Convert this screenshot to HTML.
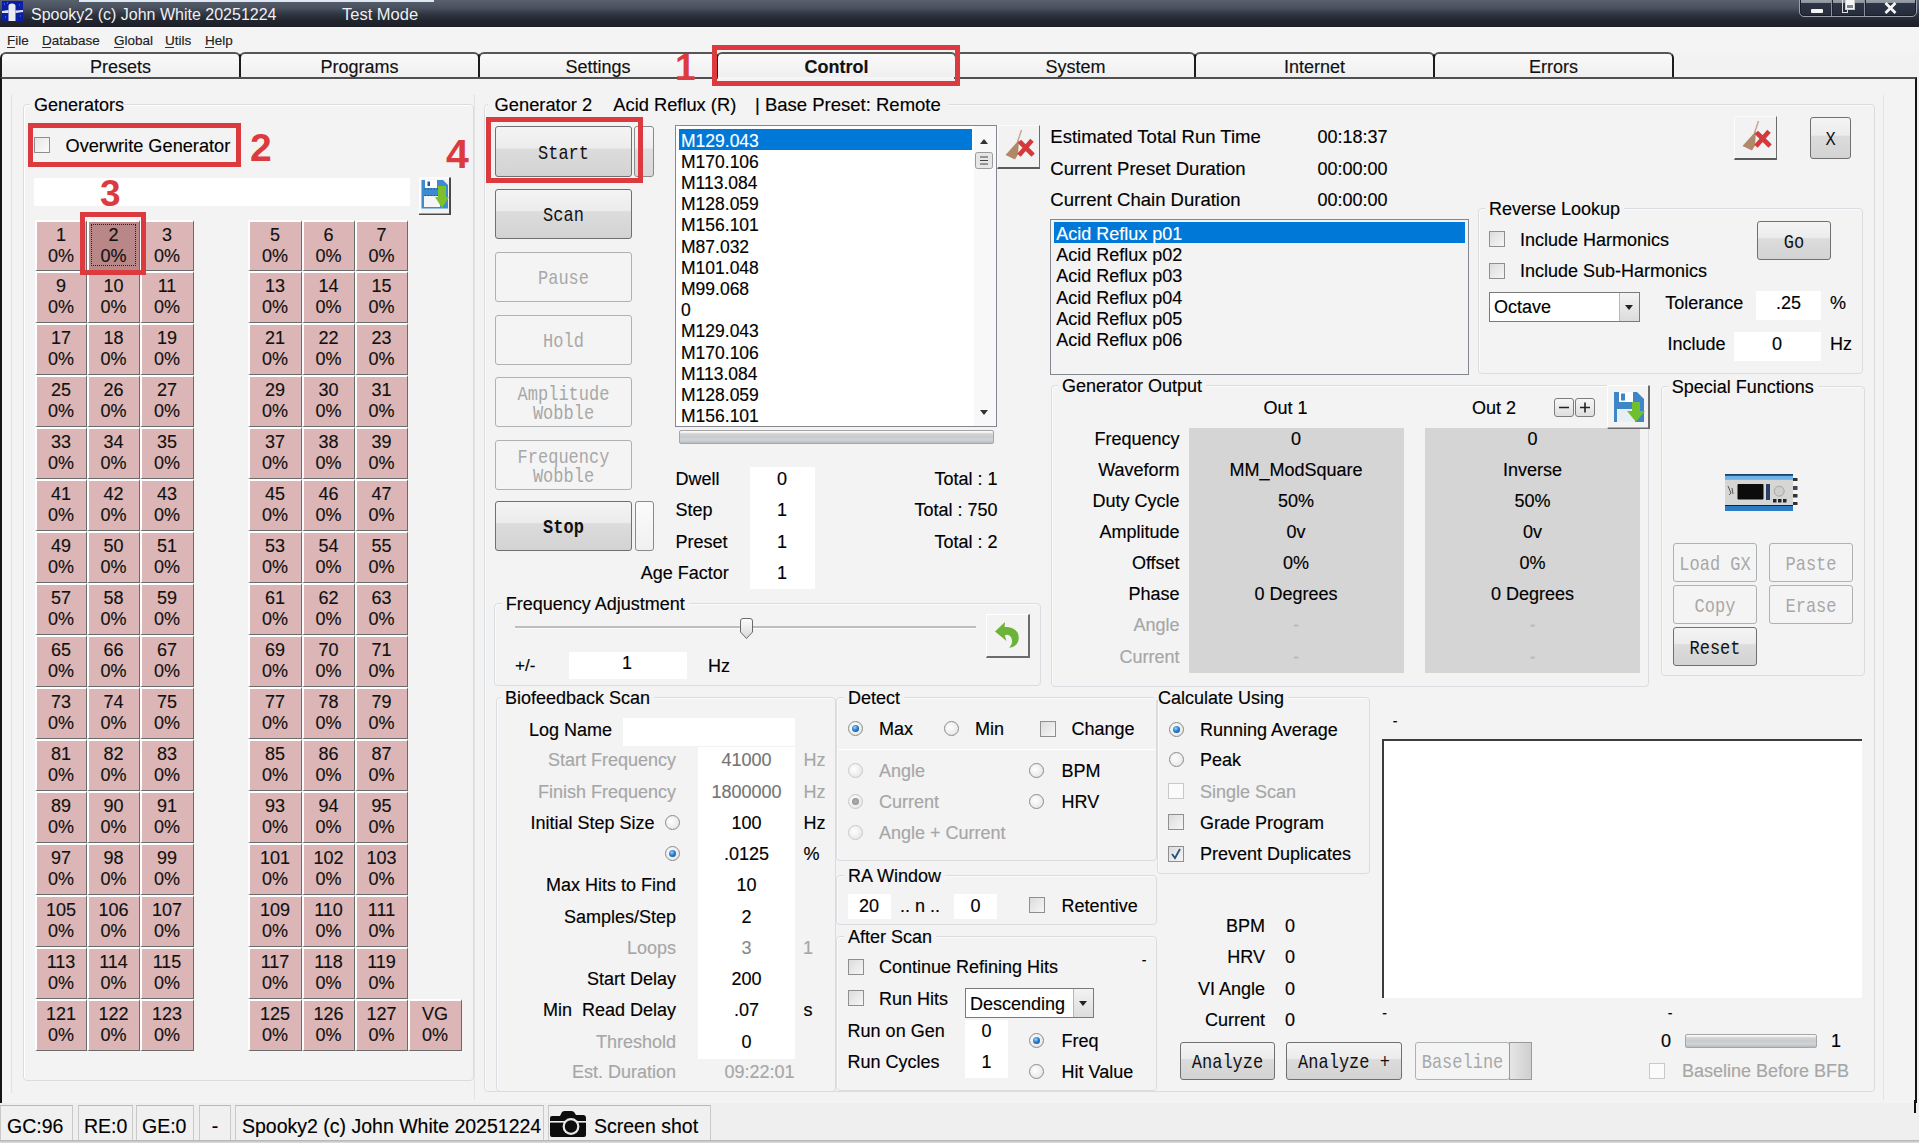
<!DOCTYPE html><html><head><meta charset="utf-8"><title>Spooky2</title><style>
*{margin:0;padding:0;box-sizing:border-box}
html,body{width:1919px;height:1143px;overflow:hidden;background:#f2f2f2;position:relative}
body>div,body>svg{position:absolute}
div{position:absolute}
.t{white-space:pre;color:#000}
.S{font-family:"Liberation Sans",sans-serif;-webkit-text-stroke:0.15px currentColor}
.M{font-family:"Liberation Mono",monospace}
.R{font-family:"Liberation Serif",serif}
.btn{border:1px solid #707070;border-radius:3px;background:linear-gradient(#f4f4f4 0%,#ececec 43%,#dcdcdc 45%,#d3d3d3 100%)}
.dbtn{border:1px solid #adb2b5;border-radius:3px;background:#f4f4f4}
.grp{border:1px solid #d5dfe5;border-radius:4px;box-shadow:inset 1px 1px 0 #fff, 1px 1px 0 #fff}
.cell{background:#dcb6b6;border-top:2px solid #fff;border-left:2px solid #fff;border-right:1px solid #6a6a6a;border-bottom:1px solid #6a6a6a}
.red{border:5px solid #dc3a3f}
.num{font-family:"Liberation Sans",sans-serif;font-weight:bold;color:#dc3a3f;white-space:nowrap}
.wb{background:#fff}
.chk{border:1px solid #8f8f8f;background:linear-gradient(135deg,#e6e6e6,#fbfbfb)}
.rad{border:1px solid #8f8f8f;border-radius:50%;background:radial-gradient(circle at 50% 50%,#fff 0%,#e8e8e8 100%)}
</style></head><body>
<div style="left:0px;top:0px;width:1919px;height:27px;background:linear-gradient(#5a616e 0%,#4a515e 30%,#323844 50%,#22262f 75%,#1c1f28 100%)"></div>
<div style="left:79px;top:0px;width:355px;height:2px;background:#dfe8f2"></div>
<svg style="left:2px;top:1px" width="21" height="21" viewBox="0 0 21 21"><rect x="0" y="0" width="21" height="20" fill="#0c1ea6"/><path d="M6.5 20 V5 Q6.5 2.5 10 2.5 Q13.5 2.5 13.5 5 V20 Z" fill="#e9ecf0"/><path d="M0 10 L6.5 9 V12 L0 12 Z M21 9 L13.5 9.5 V12 L21 11 Z" fill="#dfe4ea"/><path d="M2 3 h1 M17 4 h1 M3 16 h1 M18 15 h1 M5 2h1" stroke="#3aa0ff" stroke-width="1"/></svg>
<div class="t S" style="top:6.5px;font-size:16px;line-height:16px;color:#eef0f3;left:31px;-webkit-text-stroke:0">Spooky2 (c) John White 20251224</div>
<div class="t S" style="top:6.2px;font-size:16.5px;line-height:16.5px;color:#eef0f3;left:342px;-webkit-text-stroke:0">Test Mode</div>
<div style="left:1799px;top:-4px;width:118px;height:21px;border:1px solid #9aa0aa;border-radius:0 0 5px 5px;background:linear-gradient(#a9afb8 0%,#8d949f 30%,#2e3545 32%,#262c3a 100%);box-shadow:inset 0 0 0 1px #1a1e28"></div>
<div style="left:1831px;top:-3px;width:2px;height:19px;background:#1e2330;border-left:1px solid #8a909c"></div>
<div style="left:1864px;top:-3px;width:2px;height:19px;background:#1e2330;border-left:1px solid #8a909c"></div>
<div style="left:1811px;top:9px;width:12px;height:4px;background:#f4f4f4;border-radius:1px"></div>
<div style="left:1842px;top:0px;width:6px;height:13px;border:1px solid #ddd;border-top:none;background:transparent"></div>
<div style="left:1845px;top:-1px;width:10px;height:11px;background:#f5f5f5;border:1px solid #ccc"></div>
<div style="left:1847px;top:5px;width:6px;height:3px;background:#7a8595"></div>
<svg style="left:1884px;top:2px" width="13" height="12" viewBox="0 0 13 12"><path d="M1.5 1 L11.5 11 M11.5 1 L1.5 11" stroke="#f5f5f5" stroke-width="2.8"/></svg>
<div style="left:0px;top:27px;width:1919px;height:26px;background:#f4f4f5"></div>
<div class="t S" style="top:33.8px;font-size:13.5px;line-height:13.5px;color:#222;left:7px;text-decoration:none">File</div>
<div class="t S" style="top:33.8px;font-size:13.5px;line-height:13.5px;color:#222;left:42px;text-decoration:none">Database</div>
<div class="t S" style="top:33.8px;font-size:13.5px;line-height:13.5px;color:#222;left:114px;text-decoration:none">Global</div>
<div class="t S" style="top:33.8px;font-size:13.5px;line-height:13.5px;color:#222;left:165px;text-decoration:none">Utils</div>
<div class="t S" style="top:33.8px;font-size:13.5px;line-height:13.5px;color:#222;left:205px;text-decoration:none">Help</div>
<div style="left:7px;top:47px;width:8px;height:1px;background:#333"></div>
<div style="left:42px;top:47px;width:9px;height:1px;background:#333"></div>
<div style="left:114px;top:47px;width:10px;height:1px;background:#333"></div>
<div style="left:165px;top:47px;width:9px;height:1px;background:#333"></div>
<div style="left:205px;top:47px;width:9px;height:1px;background:#333"></div>
<div style="left:0px;top:52px;width:241px;height:27px;border:2px solid #1c1c1c;border-top-color:#575757;border-bottom:none;border-radius:6px 6px 0 0;background:linear-gradient(#fafafa,#eeeeee)"></div>
<div class="t S" style="top:57.5px;font-size:18px;line-height:18px;color:#111;left:120.5px;transform:translateX(-50%);">Presets</div>
<div style="left:239px;top:52px;width:241px;height:27px;border:2px solid #1c1c1c;border-top-color:#575757;border-bottom:none;border-radius:6px 6px 0 0;background:linear-gradient(#fafafa,#eeeeee)"></div>
<div class="t S" style="top:57.5px;font-size:18px;line-height:18px;color:#111;left:359.5px;transform:translateX(-50%);">Programs</div>
<div style="left:478px;top:52px;width:240px;height:27px;border:2px solid #1c1c1c;border-top-color:#575757;border-bottom:none;border-radius:6px 6px 0 0;background:linear-gradient(#fafafa,#eeeeee)"></div>
<div class="t S" style="top:57.5px;font-size:18px;line-height:18px;color:#111;left:598.0px;transform:translateX(-50%);">Settings</div>
<div style="left:716px;top:52px;width:241px;height:27px;border:2px solid #1c1c1c;border-top-color:#575757;border-bottom:none;border-radius:6px 6px 0 0;background:linear-gradient(#fafafa,#eeeeee)"></div>
<div class="t S" style="top:57.5px;font-size:18px;line-height:18px;color:#111;font-weight:bold;left:836.5px;transform:translateX(-50%);">Control</div>
<div style="left:955px;top:52px;width:241px;height:27px;border:2px solid #1c1c1c;border-top-color:#575757;border-bottom:none;border-radius:6px 6px 0 0;background:linear-gradient(#fafafa,#eeeeee)"></div>
<div class="t S" style="top:57.5px;font-size:18px;line-height:18px;color:#111;left:1075.5px;transform:translateX(-50%);">System</div>
<div style="left:1194px;top:52px;width:241px;height:27px;border:2px solid #1c1c1c;border-top-color:#575757;border-bottom:none;border-radius:6px 6px 0 0;background:linear-gradient(#fafafa,#eeeeee)"></div>
<div class="t S" style="top:57.5px;font-size:18px;line-height:18px;color:#111;left:1314.5px;transform:translateX(-50%);">Internet</div>
<div style="left:1433px;top:52px;width:241px;height:27px;border:2px solid #1c1c1c;border-top-color:#575757;border-bottom:none;border-radius:6px 6px 0 0;background:linear-gradient(#fafafa,#eeeeee)"></div>
<div class="t S" style="top:57.5px;font-size:18px;line-height:18px;color:#111;left:1553.5px;transform:translateX(-50%);">Errors</div>
<div style="left:0px;top:77px;width:1917px;height:1029px;border:2px solid #151515;border-top-color:#4f4f4f;border-bottom:none;background:#f3f3f3"></div>
<div style="left:718px;top:77px;width:236px;height:2px;background:#f6f6f6"></div>
<div style="left:0px;top:1103px;width:1919px;height:40px;background:#efefef"></div>
<div style="left:0px;top:1105px;width:73px;height:38px;border-top:1px solid #b9b9b9;border-left:1px solid #c9c9c9;border-right:1px solid #c9c9c9;background:#f0f0f0"></div>
<div style="left:78px;top:1105px;width:55px;height:38px;border-top:1px solid #b9b9b9;border-left:1px solid #c9c9c9;border-right:1px solid #c9c9c9;background:#f0f0f0"></div>
<div style="left:136px;top:1105px;width:58px;height:38px;border-top:1px solid #b9b9b9;border-left:1px solid #c9c9c9;border-right:1px solid #c9c9c9;background:#f0f0f0"></div>
<div style="left:199px;top:1105px;width:32px;height:38px;border-top:1px solid #b9b9b9;border-left:1px solid #c9c9c9;border-right:1px solid #c9c9c9;background:#f0f0f0"></div>
<div style="left:235px;top:1105px;width:309px;height:38px;border-top:1px solid #b9b9b9;border-left:1px solid #c9c9c9;border-right:1px solid #c9c9c9;background:#f0f0f0"></div>
<div style="left:548px;top:1105px;width:163px;height:38px;border-top:1px solid #b9b9b9;border-left:1px solid #c9c9c9;border-right:1px solid #c9c9c9;background:#f0f0f0"></div>
<div class="t S" style="top:1116.8px;font-size:19.5px;line-height:19.5px;left:7px;">GC:96</div>
<div class="t S" style="top:1116.8px;font-size:19.5px;line-height:19.5px;left:84px;">RE:0</div>
<div class="t S" style="top:1116.8px;font-size:19.5px;line-height:19.5px;left:142px;">GE:0</div>
<div class="t S" style="top:1116.8px;font-size:19.5px;line-height:19.5px;left:215px;transform:translateX(-50%);">-</div>
<div class="t S" style="top:1116.8px;font-size:19.5px;line-height:19.5px;left:242px;">Spooky2 (c) John White 20251224</div>
<div class="t S" style="top:1116.8px;font-size:19.5px;line-height:19.5px;left:594px;">Screen shot</div>
<div style="left:0px;top:1140px;width:1919px;height:3px;background:linear-gradient(#b9b9b9 0%,#b9b9b9 40%,#d9d9d9 60%,#dcdcdc 100%)"></div>
<div style="left:1914px;top:1100px;width:2px;height:13px;background:#111"></div>
<div style="left:11px;top:94px;width:464px;height:1000px;border:1px solid #e2e2e2;border-top-color:transparent;border-bottom-color:transparent;border-radius:3px"></div>
<div style="left:23px;top:104px;width:451px;height:977px;border:1px solid #d9dde0;border-radius:4px;box-shadow:inset 1px 1px 0 #fff"></div>
<div style="left:30px;top:97px;width:92px;height:14px;background:#f3f3f3"></div>
<div class="t S" style="top:96.0px;font-size:18px;line-height:18px;left:34px;">Generators</div>
<div class="chk" style="left:34px;top:137px;width:16px;height:16px;"></div>
<div class="t S" style="top:137.4px;font-size:18.2px;line-height:18.2px;left:65.5px;">Overwrite Generator</div>
<div style="left:34px;top:178px;width:376px;height:28px;background:#fff"></div>
<svg style="left:419px;top:177px" width="32" height="38" viewBox="0 0 32 38"><rect x="0" y="0" width="32" height="38" fill="#f3f3f3"/><path d="M1 37 V1 H31" fill="none" stroke="#fff" stroke-width="1.5"/><path d="M31 0.5 V37.5 H0" fill="none" stroke="#4a4a4a" stroke-width="2"/><path d="M2.5 3 H24 L29 8 V31.5 H2.5 Z" fill="#3d8bd0"/><rect x="6" y="3" width="12" height="8" fill="#fff"/><rect x="8.5" y="4.5" width="2.5" height="4.5" fill="#1a5aa8"/><rect x="5" y="19" width="16" height="11" fill="#f4f6f8"/><path d="M5.5 12 H20 M5.5 18.5 H20" stroke="#1f3f6f" stroke-width="0.8" stroke-dasharray="1.5 1.5"/><path d="M19 9 H27 V20 H30 L23 31 L16 20 H19 Z" fill="#7cc226"/></svg>
<div class="cell" style="left:35px;top:220px;width:52px;height:51px;"></div>
<div class="t S" style="top:225.5px;font-size:18px;line-height:18px;color:#111;left:61.0px;transform:translateX(-50%);">1</div>
<div class="t S" style="top:246.5px;font-size:18px;line-height:18px;color:#111;left:61.0px;transform:translateX(-50%);">0%</div>
<div class="cell" style="left:87px;top:220px;width:53px;height:51px;background:#b98787;"></div>
<div class="t S" style="top:225.5px;font-size:18px;line-height:18px;color:#111;left:113.5px;transform:translateX(-50%);">2</div>
<div class="t S" style="top:246.5px;font-size:18px;line-height:18px;color:#111;left:113.5px;transform:translateX(-50%);">0%</div>
<div style="left:91px;top:224px;width:45px;height:42px;border:1px dotted #222"></div>
<div class="cell" style="left:140px;top:220px;width:54px;height:51px;"></div>
<div class="t S" style="top:225.5px;font-size:18px;line-height:18px;color:#111;left:167.0px;transform:translateX(-50%);">3</div>
<div class="t S" style="top:246.5px;font-size:18px;line-height:18px;color:#111;left:167.0px;transform:translateX(-50%);">0%</div>
<div class="cell" style="left:248px;top:220px;width:54px;height:51px;"></div>
<div class="t S" style="top:225.5px;font-size:18px;line-height:18px;color:#111;left:275.0px;transform:translateX(-50%);">5</div>
<div class="t S" style="top:246.5px;font-size:18px;line-height:18px;color:#111;left:275.0px;transform:translateX(-50%);">0%</div>
<div class="cell" style="left:302px;top:220px;width:53px;height:51px;"></div>
<div class="t S" style="top:225.5px;font-size:18px;line-height:18px;color:#111;left:328.5px;transform:translateX(-50%);">6</div>
<div class="t S" style="top:246.5px;font-size:18px;line-height:18px;color:#111;left:328.5px;transform:translateX(-50%);">0%</div>
<div class="cell" style="left:355px;top:220px;width:53px;height:51px;"></div>
<div class="t S" style="top:225.5px;font-size:18px;line-height:18px;color:#111;left:381.5px;transform:translateX(-50%);">7</div>
<div class="t S" style="top:246.5px;font-size:18px;line-height:18px;color:#111;left:381.5px;transform:translateX(-50%);">0%</div>
<div class="cell" style="left:35px;top:271px;width:52px;height:52px;"></div>
<div class="t S" style="top:276.5px;font-size:18px;line-height:18px;color:#111;left:61.0px;transform:translateX(-50%);">9</div>
<div class="t S" style="top:297.5px;font-size:18px;line-height:18px;color:#111;left:61.0px;transform:translateX(-50%);">0%</div>
<div class="cell" style="left:87px;top:271px;width:53px;height:52px;"></div>
<div class="t S" style="top:276.5px;font-size:18px;line-height:18px;color:#111;left:113.5px;transform:translateX(-50%);">10</div>
<div class="t S" style="top:297.5px;font-size:18px;line-height:18px;color:#111;left:113.5px;transform:translateX(-50%);">0%</div>
<div class="cell" style="left:140px;top:271px;width:54px;height:52px;"></div>
<div class="t S" style="top:276.5px;font-size:18px;line-height:18px;color:#111;left:167.0px;transform:translateX(-50%);">11</div>
<div class="t S" style="top:297.5px;font-size:18px;line-height:18px;color:#111;left:167.0px;transform:translateX(-50%);">0%</div>
<div class="cell" style="left:248px;top:271px;width:54px;height:52px;"></div>
<div class="t S" style="top:276.5px;font-size:18px;line-height:18px;color:#111;left:275.0px;transform:translateX(-50%);">13</div>
<div class="t S" style="top:297.5px;font-size:18px;line-height:18px;color:#111;left:275.0px;transform:translateX(-50%);">0%</div>
<div class="cell" style="left:302px;top:271px;width:53px;height:52px;"></div>
<div class="t S" style="top:276.5px;font-size:18px;line-height:18px;color:#111;left:328.5px;transform:translateX(-50%);">14</div>
<div class="t S" style="top:297.5px;font-size:18px;line-height:18px;color:#111;left:328.5px;transform:translateX(-50%);">0%</div>
<div class="cell" style="left:355px;top:271px;width:53px;height:52px;"></div>
<div class="t S" style="top:276.5px;font-size:18px;line-height:18px;color:#111;left:381.5px;transform:translateX(-50%);">15</div>
<div class="t S" style="top:297.5px;font-size:18px;line-height:18px;color:#111;left:381.5px;transform:translateX(-50%);">0%</div>
<div class="cell" style="left:35px;top:323px;width:52px;height:52px;"></div>
<div class="t S" style="top:328.5px;font-size:18px;line-height:18px;color:#111;left:61.0px;transform:translateX(-50%);">17</div>
<div class="t S" style="top:349.5px;font-size:18px;line-height:18px;color:#111;left:61.0px;transform:translateX(-50%);">0%</div>
<div class="cell" style="left:87px;top:323px;width:53px;height:52px;"></div>
<div class="t S" style="top:328.5px;font-size:18px;line-height:18px;color:#111;left:113.5px;transform:translateX(-50%);">18</div>
<div class="t S" style="top:349.5px;font-size:18px;line-height:18px;color:#111;left:113.5px;transform:translateX(-50%);">0%</div>
<div class="cell" style="left:140px;top:323px;width:54px;height:52px;"></div>
<div class="t S" style="top:328.5px;font-size:18px;line-height:18px;color:#111;left:167.0px;transform:translateX(-50%);">19</div>
<div class="t S" style="top:349.5px;font-size:18px;line-height:18px;color:#111;left:167.0px;transform:translateX(-50%);">0%</div>
<div class="cell" style="left:248px;top:323px;width:54px;height:52px;"></div>
<div class="t S" style="top:328.5px;font-size:18px;line-height:18px;color:#111;left:275.0px;transform:translateX(-50%);">21</div>
<div class="t S" style="top:349.5px;font-size:18px;line-height:18px;color:#111;left:275.0px;transform:translateX(-50%);">0%</div>
<div class="cell" style="left:302px;top:323px;width:53px;height:52px;"></div>
<div class="t S" style="top:328.5px;font-size:18px;line-height:18px;color:#111;left:328.5px;transform:translateX(-50%);">22</div>
<div class="t S" style="top:349.5px;font-size:18px;line-height:18px;color:#111;left:328.5px;transform:translateX(-50%);">0%</div>
<div class="cell" style="left:355px;top:323px;width:53px;height:52px;"></div>
<div class="t S" style="top:328.5px;font-size:18px;line-height:18px;color:#111;left:381.5px;transform:translateX(-50%);">23</div>
<div class="t S" style="top:349.5px;font-size:18px;line-height:18px;color:#111;left:381.5px;transform:translateX(-50%);">0%</div>
<div class="cell" style="left:35px;top:375px;width:52px;height:52px;"></div>
<div class="t S" style="top:380.5px;font-size:18px;line-height:18px;color:#111;left:61.0px;transform:translateX(-50%);">25</div>
<div class="t S" style="top:401.5px;font-size:18px;line-height:18px;color:#111;left:61.0px;transform:translateX(-50%);">0%</div>
<div class="cell" style="left:87px;top:375px;width:53px;height:52px;"></div>
<div class="t S" style="top:380.5px;font-size:18px;line-height:18px;color:#111;left:113.5px;transform:translateX(-50%);">26</div>
<div class="t S" style="top:401.5px;font-size:18px;line-height:18px;color:#111;left:113.5px;transform:translateX(-50%);">0%</div>
<div class="cell" style="left:140px;top:375px;width:54px;height:52px;"></div>
<div class="t S" style="top:380.5px;font-size:18px;line-height:18px;color:#111;left:167.0px;transform:translateX(-50%);">27</div>
<div class="t S" style="top:401.5px;font-size:18px;line-height:18px;color:#111;left:167.0px;transform:translateX(-50%);">0%</div>
<div class="cell" style="left:248px;top:375px;width:54px;height:52px;"></div>
<div class="t S" style="top:380.5px;font-size:18px;line-height:18px;color:#111;left:275.0px;transform:translateX(-50%);">29</div>
<div class="t S" style="top:401.5px;font-size:18px;line-height:18px;color:#111;left:275.0px;transform:translateX(-50%);">0%</div>
<div class="cell" style="left:302px;top:375px;width:53px;height:52px;"></div>
<div class="t S" style="top:380.5px;font-size:18px;line-height:18px;color:#111;left:328.5px;transform:translateX(-50%);">30</div>
<div class="t S" style="top:401.5px;font-size:18px;line-height:18px;color:#111;left:328.5px;transform:translateX(-50%);">0%</div>
<div class="cell" style="left:355px;top:375px;width:53px;height:52px;"></div>
<div class="t S" style="top:380.5px;font-size:18px;line-height:18px;color:#111;left:381.5px;transform:translateX(-50%);">31</div>
<div class="t S" style="top:401.5px;font-size:18px;line-height:18px;color:#111;left:381.5px;transform:translateX(-50%);">0%</div>
<div class="cell" style="left:35px;top:427px;width:52px;height:52px;"></div>
<div class="t S" style="top:432.5px;font-size:18px;line-height:18px;color:#111;left:61.0px;transform:translateX(-50%);">33</div>
<div class="t S" style="top:453.5px;font-size:18px;line-height:18px;color:#111;left:61.0px;transform:translateX(-50%);">0%</div>
<div class="cell" style="left:87px;top:427px;width:53px;height:52px;"></div>
<div class="t S" style="top:432.5px;font-size:18px;line-height:18px;color:#111;left:113.5px;transform:translateX(-50%);">34</div>
<div class="t S" style="top:453.5px;font-size:18px;line-height:18px;color:#111;left:113.5px;transform:translateX(-50%);">0%</div>
<div class="cell" style="left:140px;top:427px;width:54px;height:52px;"></div>
<div class="t S" style="top:432.5px;font-size:18px;line-height:18px;color:#111;left:167.0px;transform:translateX(-50%);">35</div>
<div class="t S" style="top:453.5px;font-size:18px;line-height:18px;color:#111;left:167.0px;transform:translateX(-50%);">0%</div>
<div class="cell" style="left:248px;top:427px;width:54px;height:52px;"></div>
<div class="t S" style="top:432.5px;font-size:18px;line-height:18px;color:#111;left:275.0px;transform:translateX(-50%);">37</div>
<div class="t S" style="top:453.5px;font-size:18px;line-height:18px;color:#111;left:275.0px;transform:translateX(-50%);">0%</div>
<div class="cell" style="left:302px;top:427px;width:53px;height:52px;"></div>
<div class="t S" style="top:432.5px;font-size:18px;line-height:18px;color:#111;left:328.5px;transform:translateX(-50%);">38</div>
<div class="t S" style="top:453.5px;font-size:18px;line-height:18px;color:#111;left:328.5px;transform:translateX(-50%);">0%</div>
<div class="cell" style="left:355px;top:427px;width:53px;height:52px;"></div>
<div class="t S" style="top:432.5px;font-size:18px;line-height:18px;color:#111;left:381.5px;transform:translateX(-50%);">39</div>
<div class="t S" style="top:453.5px;font-size:18px;line-height:18px;color:#111;left:381.5px;transform:translateX(-50%);">0%</div>
<div class="cell" style="left:35px;top:479px;width:52px;height:52px;"></div>
<div class="t S" style="top:484.5px;font-size:18px;line-height:18px;color:#111;left:61.0px;transform:translateX(-50%);">41</div>
<div class="t S" style="top:505.5px;font-size:18px;line-height:18px;color:#111;left:61.0px;transform:translateX(-50%);">0%</div>
<div class="cell" style="left:87px;top:479px;width:53px;height:52px;"></div>
<div class="t S" style="top:484.5px;font-size:18px;line-height:18px;color:#111;left:113.5px;transform:translateX(-50%);">42</div>
<div class="t S" style="top:505.5px;font-size:18px;line-height:18px;color:#111;left:113.5px;transform:translateX(-50%);">0%</div>
<div class="cell" style="left:140px;top:479px;width:54px;height:52px;"></div>
<div class="t S" style="top:484.5px;font-size:18px;line-height:18px;color:#111;left:167.0px;transform:translateX(-50%);">43</div>
<div class="t S" style="top:505.5px;font-size:18px;line-height:18px;color:#111;left:167.0px;transform:translateX(-50%);">0%</div>
<div class="cell" style="left:248px;top:479px;width:54px;height:52px;"></div>
<div class="t S" style="top:484.5px;font-size:18px;line-height:18px;color:#111;left:275.0px;transform:translateX(-50%);">45</div>
<div class="t S" style="top:505.5px;font-size:18px;line-height:18px;color:#111;left:275.0px;transform:translateX(-50%);">0%</div>
<div class="cell" style="left:302px;top:479px;width:53px;height:52px;"></div>
<div class="t S" style="top:484.5px;font-size:18px;line-height:18px;color:#111;left:328.5px;transform:translateX(-50%);">46</div>
<div class="t S" style="top:505.5px;font-size:18px;line-height:18px;color:#111;left:328.5px;transform:translateX(-50%);">0%</div>
<div class="cell" style="left:355px;top:479px;width:53px;height:52px;"></div>
<div class="t S" style="top:484.5px;font-size:18px;line-height:18px;color:#111;left:381.5px;transform:translateX(-50%);">47</div>
<div class="t S" style="top:505.5px;font-size:18px;line-height:18px;color:#111;left:381.5px;transform:translateX(-50%);">0%</div>
<div class="cell" style="left:35px;top:531px;width:52px;height:52px;"></div>
<div class="t S" style="top:536.5px;font-size:18px;line-height:18px;color:#111;left:61.0px;transform:translateX(-50%);">49</div>
<div class="t S" style="top:557.5px;font-size:18px;line-height:18px;color:#111;left:61.0px;transform:translateX(-50%);">0%</div>
<div class="cell" style="left:87px;top:531px;width:53px;height:52px;"></div>
<div class="t S" style="top:536.5px;font-size:18px;line-height:18px;color:#111;left:113.5px;transform:translateX(-50%);">50</div>
<div class="t S" style="top:557.5px;font-size:18px;line-height:18px;color:#111;left:113.5px;transform:translateX(-50%);">0%</div>
<div class="cell" style="left:140px;top:531px;width:54px;height:52px;"></div>
<div class="t S" style="top:536.5px;font-size:18px;line-height:18px;color:#111;left:167.0px;transform:translateX(-50%);">51</div>
<div class="t S" style="top:557.5px;font-size:18px;line-height:18px;color:#111;left:167.0px;transform:translateX(-50%);">0%</div>
<div class="cell" style="left:248px;top:531px;width:54px;height:52px;"></div>
<div class="t S" style="top:536.5px;font-size:18px;line-height:18px;color:#111;left:275.0px;transform:translateX(-50%);">53</div>
<div class="t S" style="top:557.5px;font-size:18px;line-height:18px;color:#111;left:275.0px;transform:translateX(-50%);">0%</div>
<div class="cell" style="left:302px;top:531px;width:53px;height:52px;"></div>
<div class="t S" style="top:536.5px;font-size:18px;line-height:18px;color:#111;left:328.5px;transform:translateX(-50%);">54</div>
<div class="t S" style="top:557.5px;font-size:18px;line-height:18px;color:#111;left:328.5px;transform:translateX(-50%);">0%</div>
<div class="cell" style="left:355px;top:531px;width:53px;height:52px;"></div>
<div class="t S" style="top:536.5px;font-size:18px;line-height:18px;color:#111;left:381.5px;transform:translateX(-50%);">55</div>
<div class="t S" style="top:557.5px;font-size:18px;line-height:18px;color:#111;left:381.5px;transform:translateX(-50%);">0%</div>
<div class="cell" style="left:35px;top:583px;width:52px;height:52px;"></div>
<div class="t S" style="top:588.5px;font-size:18px;line-height:18px;color:#111;left:61.0px;transform:translateX(-50%);">57</div>
<div class="t S" style="top:609.5px;font-size:18px;line-height:18px;color:#111;left:61.0px;transform:translateX(-50%);">0%</div>
<div class="cell" style="left:87px;top:583px;width:53px;height:52px;"></div>
<div class="t S" style="top:588.5px;font-size:18px;line-height:18px;color:#111;left:113.5px;transform:translateX(-50%);">58</div>
<div class="t S" style="top:609.5px;font-size:18px;line-height:18px;color:#111;left:113.5px;transform:translateX(-50%);">0%</div>
<div class="cell" style="left:140px;top:583px;width:54px;height:52px;"></div>
<div class="t S" style="top:588.5px;font-size:18px;line-height:18px;color:#111;left:167.0px;transform:translateX(-50%);">59</div>
<div class="t S" style="top:609.5px;font-size:18px;line-height:18px;color:#111;left:167.0px;transform:translateX(-50%);">0%</div>
<div class="cell" style="left:248px;top:583px;width:54px;height:52px;"></div>
<div class="t S" style="top:588.5px;font-size:18px;line-height:18px;color:#111;left:275.0px;transform:translateX(-50%);">61</div>
<div class="t S" style="top:609.5px;font-size:18px;line-height:18px;color:#111;left:275.0px;transform:translateX(-50%);">0%</div>
<div class="cell" style="left:302px;top:583px;width:53px;height:52px;"></div>
<div class="t S" style="top:588.5px;font-size:18px;line-height:18px;color:#111;left:328.5px;transform:translateX(-50%);">62</div>
<div class="t S" style="top:609.5px;font-size:18px;line-height:18px;color:#111;left:328.5px;transform:translateX(-50%);">0%</div>
<div class="cell" style="left:355px;top:583px;width:53px;height:52px;"></div>
<div class="t S" style="top:588.5px;font-size:18px;line-height:18px;color:#111;left:381.5px;transform:translateX(-50%);">63</div>
<div class="t S" style="top:609.5px;font-size:18px;line-height:18px;color:#111;left:381.5px;transform:translateX(-50%);">0%</div>
<div class="cell" style="left:35px;top:635px;width:52px;height:52px;"></div>
<div class="t S" style="top:640.5px;font-size:18px;line-height:18px;color:#111;left:61.0px;transform:translateX(-50%);">65</div>
<div class="t S" style="top:661.5px;font-size:18px;line-height:18px;color:#111;left:61.0px;transform:translateX(-50%);">0%</div>
<div class="cell" style="left:87px;top:635px;width:53px;height:52px;"></div>
<div class="t S" style="top:640.5px;font-size:18px;line-height:18px;color:#111;left:113.5px;transform:translateX(-50%);">66</div>
<div class="t S" style="top:661.5px;font-size:18px;line-height:18px;color:#111;left:113.5px;transform:translateX(-50%);">0%</div>
<div class="cell" style="left:140px;top:635px;width:54px;height:52px;"></div>
<div class="t S" style="top:640.5px;font-size:18px;line-height:18px;color:#111;left:167.0px;transform:translateX(-50%);">67</div>
<div class="t S" style="top:661.5px;font-size:18px;line-height:18px;color:#111;left:167.0px;transform:translateX(-50%);">0%</div>
<div class="cell" style="left:248px;top:635px;width:54px;height:52px;"></div>
<div class="t S" style="top:640.5px;font-size:18px;line-height:18px;color:#111;left:275.0px;transform:translateX(-50%);">69</div>
<div class="t S" style="top:661.5px;font-size:18px;line-height:18px;color:#111;left:275.0px;transform:translateX(-50%);">0%</div>
<div class="cell" style="left:302px;top:635px;width:53px;height:52px;"></div>
<div class="t S" style="top:640.5px;font-size:18px;line-height:18px;color:#111;left:328.5px;transform:translateX(-50%);">70</div>
<div class="t S" style="top:661.5px;font-size:18px;line-height:18px;color:#111;left:328.5px;transform:translateX(-50%);">0%</div>
<div class="cell" style="left:355px;top:635px;width:53px;height:52px;"></div>
<div class="t S" style="top:640.5px;font-size:18px;line-height:18px;color:#111;left:381.5px;transform:translateX(-50%);">71</div>
<div class="t S" style="top:661.5px;font-size:18px;line-height:18px;color:#111;left:381.5px;transform:translateX(-50%);">0%</div>
<div class="cell" style="left:35px;top:687px;width:52px;height:52px;"></div>
<div class="t S" style="top:692.5px;font-size:18px;line-height:18px;color:#111;left:61.0px;transform:translateX(-50%);">73</div>
<div class="t S" style="top:713.5px;font-size:18px;line-height:18px;color:#111;left:61.0px;transform:translateX(-50%);">0%</div>
<div class="cell" style="left:87px;top:687px;width:53px;height:52px;"></div>
<div class="t S" style="top:692.5px;font-size:18px;line-height:18px;color:#111;left:113.5px;transform:translateX(-50%);">74</div>
<div class="t S" style="top:713.5px;font-size:18px;line-height:18px;color:#111;left:113.5px;transform:translateX(-50%);">0%</div>
<div class="cell" style="left:140px;top:687px;width:54px;height:52px;"></div>
<div class="t S" style="top:692.5px;font-size:18px;line-height:18px;color:#111;left:167.0px;transform:translateX(-50%);">75</div>
<div class="t S" style="top:713.5px;font-size:18px;line-height:18px;color:#111;left:167.0px;transform:translateX(-50%);">0%</div>
<div class="cell" style="left:248px;top:687px;width:54px;height:52px;"></div>
<div class="t S" style="top:692.5px;font-size:18px;line-height:18px;color:#111;left:275.0px;transform:translateX(-50%);">77</div>
<div class="t S" style="top:713.5px;font-size:18px;line-height:18px;color:#111;left:275.0px;transform:translateX(-50%);">0%</div>
<div class="cell" style="left:302px;top:687px;width:53px;height:52px;"></div>
<div class="t S" style="top:692.5px;font-size:18px;line-height:18px;color:#111;left:328.5px;transform:translateX(-50%);">78</div>
<div class="t S" style="top:713.5px;font-size:18px;line-height:18px;color:#111;left:328.5px;transform:translateX(-50%);">0%</div>
<div class="cell" style="left:355px;top:687px;width:53px;height:52px;"></div>
<div class="t S" style="top:692.5px;font-size:18px;line-height:18px;color:#111;left:381.5px;transform:translateX(-50%);">79</div>
<div class="t S" style="top:713.5px;font-size:18px;line-height:18px;color:#111;left:381.5px;transform:translateX(-50%);">0%</div>
<div class="cell" style="left:35px;top:739px;width:52px;height:52px;"></div>
<div class="t S" style="top:744.5px;font-size:18px;line-height:18px;color:#111;left:61.0px;transform:translateX(-50%);">81</div>
<div class="t S" style="top:765.5px;font-size:18px;line-height:18px;color:#111;left:61.0px;transform:translateX(-50%);">0%</div>
<div class="cell" style="left:87px;top:739px;width:53px;height:52px;"></div>
<div class="t S" style="top:744.5px;font-size:18px;line-height:18px;color:#111;left:113.5px;transform:translateX(-50%);">82</div>
<div class="t S" style="top:765.5px;font-size:18px;line-height:18px;color:#111;left:113.5px;transform:translateX(-50%);">0%</div>
<div class="cell" style="left:140px;top:739px;width:54px;height:52px;"></div>
<div class="t S" style="top:744.5px;font-size:18px;line-height:18px;color:#111;left:167.0px;transform:translateX(-50%);">83</div>
<div class="t S" style="top:765.5px;font-size:18px;line-height:18px;color:#111;left:167.0px;transform:translateX(-50%);">0%</div>
<div class="cell" style="left:248px;top:739px;width:54px;height:52px;"></div>
<div class="t S" style="top:744.5px;font-size:18px;line-height:18px;color:#111;left:275.0px;transform:translateX(-50%);">85</div>
<div class="t S" style="top:765.5px;font-size:18px;line-height:18px;color:#111;left:275.0px;transform:translateX(-50%);">0%</div>
<div class="cell" style="left:302px;top:739px;width:53px;height:52px;"></div>
<div class="t S" style="top:744.5px;font-size:18px;line-height:18px;color:#111;left:328.5px;transform:translateX(-50%);">86</div>
<div class="t S" style="top:765.5px;font-size:18px;line-height:18px;color:#111;left:328.5px;transform:translateX(-50%);">0%</div>
<div class="cell" style="left:355px;top:739px;width:53px;height:52px;"></div>
<div class="t S" style="top:744.5px;font-size:18px;line-height:18px;color:#111;left:381.5px;transform:translateX(-50%);">87</div>
<div class="t S" style="top:765.5px;font-size:18px;line-height:18px;color:#111;left:381.5px;transform:translateX(-50%);">0%</div>
<div class="cell" style="left:35px;top:791px;width:52px;height:52px;"></div>
<div class="t S" style="top:796.5px;font-size:18px;line-height:18px;color:#111;left:61.0px;transform:translateX(-50%);">89</div>
<div class="t S" style="top:817.5px;font-size:18px;line-height:18px;color:#111;left:61.0px;transform:translateX(-50%);">0%</div>
<div class="cell" style="left:87px;top:791px;width:53px;height:52px;"></div>
<div class="t S" style="top:796.5px;font-size:18px;line-height:18px;color:#111;left:113.5px;transform:translateX(-50%);">90</div>
<div class="t S" style="top:817.5px;font-size:18px;line-height:18px;color:#111;left:113.5px;transform:translateX(-50%);">0%</div>
<div class="cell" style="left:140px;top:791px;width:54px;height:52px;"></div>
<div class="t S" style="top:796.5px;font-size:18px;line-height:18px;color:#111;left:167.0px;transform:translateX(-50%);">91</div>
<div class="t S" style="top:817.5px;font-size:18px;line-height:18px;color:#111;left:167.0px;transform:translateX(-50%);">0%</div>
<div class="cell" style="left:248px;top:791px;width:54px;height:52px;"></div>
<div class="t S" style="top:796.5px;font-size:18px;line-height:18px;color:#111;left:275.0px;transform:translateX(-50%);">93</div>
<div class="t S" style="top:817.5px;font-size:18px;line-height:18px;color:#111;left:275.0px;transform:translateX(-50%);">0%</div>
<div class="cell" style="left:302px;top:791px;width:53px;height:52px;"></div>
<div class="t S" style="top:796.5px;font-size:18px;line-height:18px;color:#111;left:328.5px;transform:translateX(-50%);">94</div>
<div class="t S" style="top:817.5px;font-size:18px;line-height:18px;color:#111;left:328.5px;transform:translateX(-50%);">0%</div>
<div class="cell" style="left:355px;top:791px;width:53px;height:52px;"></div>
<div class="t S" style="top:796.5px;font-size:18px;line-height:18px;color:#111;left:381.5px;transform:translateX(-50%);">95</div>
<div class="t S" style="top:817.5px;font-size:18px;line-height:18px;color:#111;left:381.5px;transform:translateX(-50%);">0%</div>
<div class="cell" style="left:35px;top:843px;width:52px;height:52px;"></div>
<div class="t S" style="top:848.5px;font-size:18px;line-height:18px;color:#111;left:61.0px;transform:translateX(-50%);">97</div>
<div class="t S" style="top:869.5px;font-size:18px;line-height:18px;color:#111;left:61.0px;transform:translateX(-50%);">0%</div>
<div class="cell" style="left:87px;top:843px;width:53px;height:52px;"></div>
<div class="t S" style="top:848.5px;font-size:18px;line-height:18px;color:#111;left:113.5px;transform:translateX(-50%);">98</div>
<div class="t S" style="top:869.5px;font-size:18px;line-height:18px;color:#111;left:113.5px;transform:translateX(-50%);">0%</div>
<div class="cell" style="left:140px;top:843px;width:54px;height:52px;"></div>
<div class="t S" style="top:848.5px;font-size:18px;line-height:18px;color:#111;left:167.0px;transform:translateX(-50%);">99</div>
<div class="t S" style="top:869.5px;font-size:18px;line-height:18px;color:#111;left:167.0px;transform:translateX(-50%);">0%</div>
<div class="cell" style="left:248px;top:843px;width:54px;height:52px;"></div>
<div class="t S" style="top:848.5px;font-size:18px;line-height:18px;color:#111;left:275.0px;transform:translateX(-50%);">101</div>
<div class="t S" style="top:869.5px;font-size:18px;line-height:18px;color:#111;left:275.0px;transform:translateX(-50%);">0%</div>
<div class="cell" style="left:302px;top:843px;width:53px;height:52px;"></div>
<div class="t S" style="top:848.5px;font-size:18px;line-height:18px;color:#111;left:328.5px;transform:translateX(-50%);">102</div>
<div class="t S" style="top:869.5px;font-size:18px;line-height:18px;color:#111;left:328.5px;transform:translateX(-50%);">0%</div>
<div class="cell" style="left:355px;top:843px;width:53px;height:52px;"></div>
<div class="t S" style="top:848.5px;font-size:18px;line-height:18px;color:#111;left:381.5px;transform:translateX(-50%);">103</div>
<div class="t S" style="top:869.5px;font-size:18px;line-height:18px;color:#111;left:381.5px;transform:translateX(-50%);">0%</div>
<div class="cell" style="left:35px;top:895px;width:52px;height:52px;"></div>
<div class="t S" style="top:900.5px;font-size:18px;line-height:18px;color:#111;left:61.0px;transform:translateX(-50%);">105</div>
<div class="t S" style="top:921.5px;font-size:18px;line-height:18px;color:#111;left:61.0px;transform:translateX(-50%);">0%</div>
<div class="cell" style="left:87px;top:895px;width:53px;height:52px;"></div>
<div class="t S" style="top:900.5px;font-size:18px;line-height:18px;color:#111;left:113.5px;transform:translateX(-50%);">106</div>
<div class="t S" style="top:921.5px;font-size:18px;line-height:18px;color:#111;left:113.5px;transform:translateX(-50%);">0%</div>
<div class="cell" style="left:140px;top:895px;width:54px;height:52px;"></div>
<div class="t S" style="top:900.5px;font-size:18px;line-height:18px;color:#111;left:167.0px;transform:translateX(-50%);">107</div>
<div class="t S" style="top:921.5px;font-size:18px;line-height:18px;color:#111;left:167.0px;transform:translateX(-50%);">0%</div>
<div class="cell" style="left:248px;top:895px;width:54px;height:52px;"></div>
<div class="t S" style="top:900.5px;font-size:18px;line-height:18px;color:#111;left:275.0px;transform:translateX(-50%);">109</div>
<div class="t S" style="top:921.5px;font-size:18px;line-height:18px;color:#111;left:275.0px;transform:translateX(-50%);">0%</div>
<div class="cell" style="left:302px;top:895px;width:53px;height:52px;"></div>
<div class="t S" style="top:900.5px;font-size:18px;line-height:18px;color:#111;left:328.5px;transform:translateX(-50%);">110</div>
<div class="t S" style="top:921.5px;font-size:18px;line-height:18px;color:#111;left:328.5px;transform:translateX(-50%);">0%</div>
<div class="cell" style="left:355px;top:895px;width:53px;height:52px;"></div>
<div class="t S" style="top:900.5px;font-size:18px;line-height:18px;color:#111;left:381.5px;transform:translateX(-50%);">111</div>
<div class="t S" style="top:921.5px;font-size:18px;line-height:18px;color:#111;left:381.5px;transform:translateX(-50%);">0%</div>
<div class="cell" style="left:35px;top:947px;width:52px;height:52px;"></div>
<div class="t S" style="top:952.5px;font-size:18px;line-height:18px;color:#111;left:61.0px;transform:translateX(-50%);">113</div>
<div class="t S" style="top:973.5px;font-size:18px;line-height:18px;color:#111;left:61.0px;transform:translateX(-50%);">0%</div>
<div class="cell" style="left:87px;top:947px;width:53px;height:52px;"></div>
<div class="t S" style="top:952.5px;font-size:18px;line-height:18px;color:#111;left:113.5px;transform:translateX(-50%);">114</div>
<div class="t S" style="top:973.5px;font-size:18px;line-height:18px;color:#111;left:113.5px;transform:translateX(-50%);">0%</div>
<div class="cell" style="left:140px;top:947px;width:54px;height:52px;"></div>
<div class="t S" style="top:952.5px;font-size:18px;line-height:18px;color:#111;left:167.0px;transform:translateX(-50%);">115</div>
<div class="t S" style="top:973.5px;font-size:18px;line-height:18px;color:#111;left:167.0px;transform:translateX(-50%);">0%</div>
<div class="cell" style="left:248px;top:947px;width:54px;height:52px;"></div>
<div class="t S" style="top:952.5px;font-size:18px;line-height:18px;color:#111;left:275.0px;transform:translateX(-50%);">117</div>
<div class="t S" style="top:973.5px;font-size:18px;line-height:18px;color:#111;left:275.0px;transform:translateX(-50%);">0%</div>
<div class="cell" style="left:302px;top:947px;width:53px;height:52px;"></div>
<div class="t S" style="top:952.5px;font-size:18px;line-height:18px;color:#111;left:328.5px;transform:translateX(-50%);">118</div>
<div class="t S" style="top:973.5px;font-size:18px;line-height:18px;color:#111;left:328.5px;transform:translateX(-50%);">0%</div>
<div class="cell" style="left:355px;top:947px;width:53px;height:52px;"></div>
<div class="t S" style="top:952.5px;font-size:18px;line-height:18px;color:#111;left:381.5px;transform:translateX(-50%);">119</div>
<div class="t S" style="top:973.5px;font-size:18px;line-height:18px;color:#111;left:381.5px;transform:translateX(-50%);">0%</div>
<div class="cell" style="left:35px;top:999px;width:52px;height:52px;"></div>
<div class="t S" style="top:1004.5px;font-size:18px;line-height:18px;color:#111;left:61.0px;transform:translateX(-50%);">121</div>
<div class="t S" style="top:1025.5px;font-size:18px;line-height:18px;color:#111;left:61.0px;transform:translateX(-50%);">0%</div>
<div class="cell" style="left:87px;top:999px;width:53px;height:52px;"></div>
<div class="t S" style="top:1004.5px;font-size:18px;line-height:18px;color:#111;left:113.5px;transform:translateX(-50%);">122</div>
<div class="t S" style="top:1025.5px;font-size:18px;line-height:18px;color:#111;left:113.5px;transform:translateX(-50%);">0%</div>
<div class="cell" style="left:140px;top:999px;width:54px;height:52px;"></div>
<div class="t S" style="top:1004.5px;font-size:18px;line-height:18px;color:#111;left:167.0px;transform:translateX(-50%);">123</div>
<div class="t S" style="top:1025.5px;font-size:18px;line-height:18px;color:#111;left:167.0px;transform:translateX(-50%);">0%</div>
<div class="cell" style="left:248px;top:999px;width:54px;height:52px;"></div>
<div class="t S" style="top:1004.5px;font-size:18px;line-height:18px;color:#111;left:275.0px;transform:translateX(-50%);">125</div>
<div class="t S" style="top:1025.5px;font-size:18px;line-height:18px;color:#111;left:275.0px;transform:translateX(-50%);">0%</div>
<div class="cell" style="left:302px;top:999px;width:53px;height:52px;"></div>
<div class="t S" style="top:1004.5px;font-size:18px;line-height:18px;color:#111;left:328.5px;transform:translateX(-50%);">126</div>
<div class="t S" style="top:1025.5px;font-size:18px;line-height:18px;color:#111;left:328.5px;transform:translateX(-50%);">0%</div>
<div class="cell" style="left:355px;top:999px;width:53px;height:52px;"></div>
<div class="t S" style="top:1004.5px;font-size:18px;line-height:18px;color:#111;left:381.5px;transform:translateX(-50%);">127</div>
<div class="t S" style="top:1025.5px;font-size:18px;line-height:18px;color:#111;left:381.5px;transform:translateX(-50%);">0%</div>
<div class="cell" style="left:408px;top:999px;width:54px;height:52px;"></div>
<div class="t S" style="top:1004.5px;font-size:18px;line-height:18px;color:#111;left:435.0px;transform:translateX(-50%);">VG</div>
<div class="t S" style="top:1025.5px;font-size:18px;line-height:18px;color:#111;left:435.0px;transform:translateX(-50%);">0%</div>
<div style="left:474px;top:94px;width:1410px;height:1007px;border:1px solid #e3e3e3;border-top-color:transparent;border-bottom-color:transparent;border-radius:3px"></div>
<div style="left:484px;top:104px;width:1391px;height:988px;border:1px solid #d9dde1;border-radius:4px;box-shadow:inset 1px 1px 0 #fbfbfb"></div>
<div style="left:488px;top:97px;width:460px;height:14px;background:#f3f3f3"></div>
<div class="t S" style="top:95.8px;font-size:18.3px;line-height:18.3px;left:494.6px;">Generator 2</div>
<div class="t S" style="top:95.8px;font-size:18.3px;line-height:18.3px;left:613.3px;">Acid Reflux (R)</div>
<div class="t S" style="top:95.8px;font-size:18.5px;line-height:18.5px;left:755px;">| Base Preset: Remote</div>
<div class="btn" style="left:495px;top:126px;width:137px;height:51px"></div>
<div class="t M" style="top:144.5px;font-size:17px;line-height:17px;color:#111;left:563.5px;transform:translateX(-50%) scaleY(1.17);">Start</div>
<div style="left:634px;top:126px;width:20px;height:51px;border:1px solid #8a8a8a;border-radius:3px;background:linear-gradient(#f6f6f6 0%,#eeeeee 43%,#dfdfdf 45%,#d8d8d8 100%)"></div>
<div class="btn" style="left:495px;top:189px;width:137px;height:50px"></div>
<div class="t M" style="top:207.0px;font-size:17px;line-height:17px;color:#111;left:563.5px;transform:translateX(-50%) scaleY(1.17);">Scan</div>
<div class="dbtn" style="left:495px;top:252px;width:137px;height:50px"></div>
<div class="t M" style="top:270.0px;font-size:17px;line-height:17px;color:#a8a8a8;left:563.5px;transform:translateX(-50%) scaleY(1.17);">Pause</div>
<div class="dbtn" style="left:495px;top:315px;width:137px;height:50px"></div>
<div class="t M" style="top:333.0px;font-size:17px;line-height:17px;color:#a8a8a8;left:563.5px;transform:translateX(-50%) scaleY(1.17);">Hold</div>
<div class="dbtn" style="left:495px;top:377px;width:137px;height:50px"></div>
<div class="t M" style="top:385.5px;font-size:17px;line-height:17px;color:#a8a8a8;left:563.5px;transform:translateX(-50%) scaleY(1.17);">Amplitude</div>
<div class="t M" style="top:404.5px;font-size:17px;line-height:17px;color:#a8a8a8;left:563.5px;transform:translateX(-50%) scaleY(1.17);">Wobble</div>
<div class="dbtn" style="left:495px;top:440px;width:137px;height:50px"></div>
<div class="t M" style="top:448.5px;font-size:17px;line-height:17px;color:#a8a8a8;left:563.5px;transform:translateX(-50%) scaleY(1.17);">Frequency</div>
<div class="t M" style="top:467.5px;font-size:17px;line-height:17px;color:#a8a8a8;left:563.5px;transform:translateX(-50%) scaleY(1.17);">Wobble</div>
<div class="btn" style="left:495px;top:501px;width:137px;height:50px"></div>
<div class="t M" style="top:519.0px;font-size:17px;line-height:17px;color:#111;font-weight:bold;left:563.5px;transform:translateX(-50%) scaleY(1.17);">Stop</div>
<div style="left:635px;top:501px;width:19px;height:50px;border:1px solid #8a8a8a;border-radius:3px;background:linear-gradient(#fbfbfb,#f0f0f0)"></div>
<div style="left:675px;top:125px;width:322px;height:302px;border:1px solid #828790;background:#fff"></div>
<div style="left:679px;top:129px;width:293px;height:21px;background:#0078d7"></div>
<div class="t S" style="top:132.6px;font-size:17.5px;line-height:17.5px;color:#fff;left:681px;">M129.043</div>
<div class="t S" style="top:153.8px;font-size:17.5px;line-height:17.5px;left:681px;">M170.106</div>
<div class="t S" style="top:175.0px;font-size:17.5px;line-height:17.5px;left:681px;">M113.084</div>
<div class="t S" style="top:196.2px;font-size:17.5px;line-height:17.5px;left:681px;">M128.059</div>
<div class="t S" style="top:217.4px;font-size:17.5px;line-height:17.5px;left:681px;">M156.101</div>
<div class="t S" style="top:238.6px;font-size:17.5px;line-height:17.5px;left:681px;">M87.032</div>
<div class="t S" style="top:259.8px;font-size:17.5px;line-height:17.5px;left:681px;">M101.048</div>
<div class="t S" style="top:281.0px;font-size:17.5px;line-height:17.5px;left:681px;">M99.068</div>
<div class="t S" style="top:302.1px;font-size:17.5px;line-height:17.5px;left:681px;">0</div>
<div class="t S" style="top:323.4px;font-size:17.5px;line-height:17.5px;left:681px;">M129.043</div>
<div class="t S" style="top:344.6px;font-size:17.5px;line-height:17.5px;left:681px;">M170.106</div>
<div class="t S" style="top:365.8px;font-size:17.5px;line-height:17.5px;left:681px;">M113.084</div>
<div class="t S" style="top:386.9px;font-size:17.5px;line-height:17.5px;left:681px;">M128.059</div>
<div class="t S" style="top:408.1px;font-size:17.5px;line-height:17.5px;left:681px;">M156.101</div>
<div style="left:974px;top:126px;width:22px;height:300px;background:#f8f8f8"></div>
<svg style="left:974px;top:126px" width="22" height="300" viewBox="0 0 22 300"><path d="M6 18 L10 13 L14 18 Z" fill="#333"/><rect x="1.5" y="26.5" width="17" height="16" rx="2" fill="#e6e6e6" stroke="#9b9b9b"/><path d="M6 31 H14 M6 34.5 H14 M6 38 H14" stroke="#444" stroke-width="1"/><path d="M6 284 L10 289 L14 284 Z" fill="#333"/></svg>
<div style="left:997px;top:125px;width:43px;height:44px;background:#f2f2f2;border-top:1px solid #fbfbfb;border-left:1px solid #fbfbfb;border-right:1px solid #6b6b6b;border-bottom:2px solid #5b5b5b"></div>
<svg style="left:997px;top:125px" width="43" height="44" viewBox="0 0 43 44"><path d="M24.5 5 L20.5 17" stroke="#c9a9a0" stroke-width="1.6"/><path d="M22 15 L8.5 30 L18 34.5 L21 29.5 Z" fill="#b08a68"/><path d="M24 18 L34.5 28.5 M33.5 17 L23.5 28.5" stroke="#d43a3c" stroke-width="4.6" stroke-linecap="square"/></svg>
<div style="left:679px;top:430px;width:315px;height:14px;border:1px solid #a6a6a6;border-radius:2px;background:linear-gradient(#fafafa 0%,#f2f2f2 12%,#d3d6d9 22%,#c8cbce 50%,#d2d5d8 75%,#b8bbbe 100%)"></div>
<div style="left:750px;top:467px;width:65px;height:122px;background:#fff"></div>
<div class="t S" style="top:469.8px;font-size:18px;line-height:18px;left:675.5px;">Dwell</div>
<div class="t S" style="top:469.8px;font-size:18px;line-height:18px;left:782px;transform:translateX(-50%);">0</div>
<div class="t S" style="top:501.3px;font-size:18px;line-height:18px;left:675.5px;">Step</div>
<div class="t S" style="top:501.3px;font-size:18px;line-height:18px;left:782px;transform:translateX(-50%);">1</div>
<div class="t S" style="top:532.5px;font-size:18px;line-height:18px;left:675.5px;">Preset</div>
<div class="t S" style="top:532.5px;font-size:18px;line-height:18px;left:782px;transform:translateX(-50%);">1</div>
<div class="t S" style="top:563.5px;font-size:18px;line-height:18px;left:640.7px;">Age Factor</div>
<div class="t S" style="top:563.5px;font-size:18px;line-height:18px;left:782px;transform:translateX(-50%);">1</div>
<div class="t S" style="top:469.8px;font-size:18px;line-height:18px;right:921.5px;">Total : 1</div>
<div class="t S" style="top:501.3px;font-size:18px;line-height:18px;right:921.5px;">Total : 750</div>
<div class="t S" style="top:532.5px;font-size:18px;line-height:18px;right:921.5px;">Total : 2</div>
<div style="left:494px;top:603px;width:547px;height:83px;border:1px solid #d9dde1;border-radius:4px;box-shadow:inset 1px 1px 0 #fbfbfb"></div>
<div style="left:501.7px;top:600px;width:187px;height:6px;background:#f3f3f3"></div>
<div class="t S" style="top:594.5px;font-size:18px;line-height:18px;left:505.7px;">Frequency Adjustment</div>
<div style="left:515px;top:626px;width:461px;height:3px;background:#bdbdbd;border-bottom:1px solid #fafafa"></div>
<svg style="left:739px;top:617px" width="15" height="23" viewBox="0 0 15 23"><defs><linearGradient id="tg" x1="0" y1="0" x2="0" y2="1"><stop offset="0" stop-color="#fdfdfd"/><stop offset="1" stop-color="#d9d9d9"/></linearGradient></defs><path d="M1.5 4 Q1.5 1.5 4 1.5 H11 Q13.5 1.5 13.5 4 V15 L7.5 21.5 L1.5 15 Z" fill="url(#tg)" stroke="#6a6a6a"/></svg>
<div style="left:986px;top:614px;width:44px;height:44px;background:#f3f3f3;border-top:1px solid #fff;border-left:1px solid #fff;border-right:2px solid #6b6b6b;border-bottom:2px solid #6b6b6b"></div>
<svg style="left:986px;top:614px" width="44" height="44" viewBox="0 0 44 44"><path d="M9 17.5 L19 8 L18.6 13 C27 12.5 34 17 32.5 26 C31.5 31 27.5 33.5 23 33.5 C26.5 30.5 27 26 24.5 22.5 C22.5 20.5 20.5 20.5 18.8 21.5 L20.5 27 Z" fill="#6db33a"/></svg>
<div class="t S" style="top:657.4px;font-size:17px;line-height:17px;left:515px;">+/-</div>
<div style="left:569px;top:652px;width:118px;height:27px;background:#fff"></div>
<div class="t S" style="top:653.5px;font-size:18px;line-height:18px;left:627px;transform:translateX(-50%);">1</div>
<div class="t S" style="top:656.9px;font-size:18px;line-height:18px;left:708px;">Hz</div>
<div style="left:496px;top:697px;width:340px;height:395px;border:1px solid #d9dde1;border-radius:4px;box-shadow:inset 1px 1px 0 #fbfbfb"></div>
<div style="left:501px;top:694px;width:153px;height:6px;background:#f3f3f3"></div>
<div class="t S" style="top:688.5px;font-size:18px;line-height:18px;left:505px;">Biofeedback Scan</div>
<div class="t S" style="top:720.5px;font-size:18px;line-height:18px;left:529px;">Log Name</div>
<div style="left:623px;top:718px;width:172px;height:28px;background:#fff"></div>
<div style="left:698px;top:747px;width:97px;height:312px;background:#fff"></div>
<div class="t S" style="top:751.3px;font-size:18px;line-height:18px;color:#a6a6a6;right:1243px;">Start Frequency</div>
<div class="t S" style="top:751.3px;font-size:18px;line-height:18px;color:#747474;left:746.5px;transform:translateX(-50%);">41000</div>
<div class="t S" style="top:751.3px;font-size:18px;line-height:18px;color:#a6a6a6;left:803.5px;">Hz</div>
<div class="t S" style="top:782.5px;font-size:18px;line-height:18px;color:#a6a6a6;right:1243px;">Finish Frequency</div>
<div class="t S" style="top:782.5px;font-size:18px;line-height:18px;color:#747474;left:746.5px;transform:translateX(-50%);">1800000</div>
<div class="t S" style="top:782.5px;font-size:18px;line-height:18px;color:#a6a6a6;left:803.5px;">Hz</div>
<div class="t S" style="top:813.8px;font-size:18px;line-height:18px;right:1264.4px;">Initial Step Size</div>
<div class="t S" style="top:813.8px;font-size:18px;line-height:18px;left:746.5px;transform:translateX(-50%);">100</div>
<div class="t S" style="top:813.8px;font-size:18px;line-height:18px;left:803.5px;">Hz</div>
<div class="t S" style="top:845.1px;font-size:18px;line-height:18px;left:746.5px;transform:translateX(-50%);">.0125</div>
<div class="t S" style="top:845.1px;font-size:18px;line-height:18px;left:803.5px;">%</div>
<div class="t S" style="top:876.2px;font-size:18px;line-height:18px;right:1243px;">Max Hits to Find</div>
<div class="t S" style="top:876.2px;font-size:18px;line-height:18px;left:746.5px;transform:translateX(-50%);">10</div>
<div class="t S" style="top:907.5px;font-size:18px;line-height:18px;right:1243px;">Samples/Step</div>
<div class="t S" style="top:907.5px;font-size:18px;line-height:18px;left:746.5px;transform:translateX(-50%);">2</div>
<div class="t S" style="top:938.5px;font-size:18px;line-height:18px;color:#a6a6a6;right:1243px;">Loops</div>
<div class="t S" style="top:938.5px;font-size:18px;line-height:18px;color:#8a8a8a;left:746.5px;transform:translateX(-50%);">3</div>
<div class="t S" style="top:938.5px;font-size:18px;line-height:18px;color:#a6a6a6;left:808px;transform:translateX(-50%);">1</div>
<div class="t S" style="top:970.0px;font-size:18px;line-height:18px;right:1243px;">Start Delay</div>
<div class="t S" style="top:970.0px;font-size:18px;line-height:18px;left:746.5px;transform:translateX(-50%);">200</div>
<div class="t S" style="top:1001.2px;font-size:18px;line-height:18px;right:1243px;">Min  Read Delay</div>
<div class="t S" style="top:1001.2px;font-size:18px;line-height:18px;left:746.5px;transform:translateX(-50%);">.07</div>
<div class="t S" style="top:1001.2px;font-size:18px;line-height:18px;left:803.5px;">s</div>
<div class="t S" style="top:1032.5px;font-size:18px;line-height:18px;color:#a6a6a6;right:1243px;">Threshold</div>
<div class="t S" style="top:1032.5px;font-size:18px;line-height:18px;left:746.5px;transform:translateX(-50%);">0</div>
<div style="left:664.8px;top:814.8px;width:15px;height:15px;border:1px solid #8b8b8b;border-radius:50%;background:radial-gradient(circle at 40% 40%,#ffffff 0%,#e9e9e9 70%,#d8d8d8 100%)"></div>
<div style="left:664.8px;top:846.1px;width:15px;height:15px;border:1px solid #8b8b8b;border-radius:50%;background:radial-gradient(circle at 40% 40%,#ffffff 0%,#e9e9e9 70%,#d8d8d8 100%)"></div>
<div style="left:668.8px;top:850.1px;width:7px;height:7px;border-radius:50%;background:radial-gradient(circle at 40% 35%,#9fd3ff 0%,#2a7fd0 45%,#0d3f7a 100%)"></div>
<div class="t S" style="top:1062.9px;font-size:18px;line-height:18px;color:#a6a6a6;right:1243px;">Est. Duration</div>
<div class="t S" style="top:1062.9px;font-size:18px;line-height:18px;color:#a6a6a6;left:759.5px;transform:translateX(-50%);">09:22:01</div>
<div style="left:836px;top:697px;width:321px;height:164px;border:1px solid #d9dde1;border-radius:4px;box-shadow:inset 1px 1px 0 #fbfbfb"></div>
<div style="left:844px;top:694px;width:60px;height:6px;background:#f3f3f3"></div>
<div class="t S" style="top:688.5px;font-size:18px;line-height:18px;left:848px;">Detect</div>
<div style="left:847.5px;top:721.0px;width:15px;height:15px;border:1px solid #8b8b8b;border-radius:50%;background:radial-gradient(circle at 40% 40%,#ffffff 0%,#e9e9e9 70%,#d8d8d8 100%)"></div>
<div style="left:851.5px;top:725.0px;width:7px;height:7px;border-radius:50%;background:radial-gradient(circle at 40% 35%,#9fd3ff 0%,#2a7fd0 45%,#0d3f7a 100%)"></div>
<div class="t S" style="top:720.0px;font-size:18px;line-height:18px;left:879px;">Max</div>
<div style="left:943.5px;top:721.0px;width:15px;height:15px;border:1px solid #8b8b8b;border-radius:50%;background:radial-gradient(circle at 40% 40%,#ffffff 0%,#e9e9e9 70%,#d8d8d8 100%)"></div>
<div class="t S" style="top:720.0px;font-size:18px;line-height:18px;left:975px;">Min</div>
<div style="left:1040.0px;top:720.5px;width:16px;height:16px;border:1px solid #8e8f8f;background:linear-gradient(135deg,#dcdcdc 0%,#f6f6f6 100%)"></div>
<div class="t S" style="top:720.0px;font-size:18px;line-height:18px;left:1071.5px;">Change</div>
<div style="left:838px;top:749px;width:318px;height:1px;background:#dde0e3;border-bottom:1px solid #fff"></div>
<div style="left:847.5px;top:762.5px;width:15px;height:15px;border:1px solid #c9c9c9;border-radius:50%;background:radial-gradient(circle at 40% 40%,#ffffff 0%,#e9e9e9 70%,#d8d8d8 100%)"></div>
<div class="t S" style="top:761.5px;font-size:18px;line-height:18px;color:#a6a6a6;left:879px;">Angle</div>
<div style="left:847.5px;top:793.8px;width:15px;height:15px;border:1px solid #c9c9c9;border-radius:50%;background:radial-gradient(circle at 40% 40%,#ffffff 0%,#e9e9e9 70%,#d8d8d8 100%)"></div>
<div style="left:851.5px;top:797.8px;width:7px;height:7px;border-radius:50%;background:radial-gradient(circle,#b0b0b0,#8a8a8a)"></div>
<div class="t S" style="top:792.8px;font-size:18px;line-height:18px;color:#a6a6a6;left:879px;">Current</div>
<div style="left:847.5px;top:825.1px;width:15px;height:15px;border:1px solid #c9c9c9;border-radius:50%;background:radial-gradient(circle at 40% 40%,#ffffff 0%,#e9e9e9 70%,#d8d8d8 100%)"></div>
<div class="t S" style="top:824.1px;font-size:18px;line-height:18px;color:#a6a6a6;left:879px;">Angle + Current</div>
<div style="left:1028.5px;top:762.5px;width:15px;height:15px;border:1px solid #8b8b8b;border-radius:50%;background:radial-gradient(circle at 40% 40%,#ffffff 0%,#e9e9e9 70%,#d8d8d8 100%)"></div>
<div class="t S" style="top:761.5px;font-size:18px;line-height:18px;left:1061.6px;">BPM</div>
<div style="left:1028.5px;top:793.8px;width:15px;height:15px;border:1px solid #8b8b8b;border-radius:50%;background:radial-gradient(circle at 40% 40%,#ffffff 0%,#e9e9e9 70%,#d8d8d8 100%)"></div>
<div class="t S" style="top:792.8px;font-size:18px;line-height:18px;left:1061.6px;">HRV</div>
<div style="left:836px;top:875px;width:321px;height:50px;border:1px solid #d9dde1;border-radius:4px;box-shadow:inset 1px 1px 0 #fbfbfb"></div>
<div style="left:844px;top:872px;width:101px;height:6px;background:#f3f3f3"></div>
<div class="t S" style="top:866.5px;font-size:18px;line-height:18px;left:848px;">RA Window</div>
<div style="left:848px;top:894px;width:43px;height:25px;background:#fff"></div>
<div class="t S" style="top:896.5px;font-size:18px;line-height:18px;left:869px;transform:translateX(-50%);">20</div>
<div class="t S" style="top:896.5px;font-size:18px;line-height:18px;left:900px;">.. n ..</div>
<div style="left:954px;top:894px;width:43px;height:25px;background:#fff"></div>
<div class="t S" style="top:896.5px;font-size:18px;line-height:18px;left:975.5px;transform:translateX(-50%);">0</div>
<div style="left:1028.6px;top:897.0px;width:16px;height:16px;border:1px solid #8e8f8f;background:linear-gradient(135deg,#dcdcdc 0%,#f6f6f6 100%)"></div>
<div class="t S" style="top:896.5px;font-size:18px;line-height:18px;left:1061.6px;">Retentive</div>
<div style="left:836px;top:936px;width:321px;height:155px;border:1px solid #d9dde1;border-radius:4px;box-shadow:inset 1px 1px 0 #fbfbfb"></div>
<div style="left:844px;top:933px;width:92px;height:6px;background:#f3f3f3"></div>
<div class="t S" style="top:927.5px;font-size:18px;line-height:18px;left:848px;">After Scan</div>
<div style="left:847.7px;top:958.8px;width:16px;height:16px;border:1px solid #8e8f8f;background:linear-gradient(135deg,#dcdcdc 0%,#f6f6f6 100%)"></div>
<div class="t S" style="top:958.3px;font-size:18px;line-height:18px;left:879px;">Continue Refining Hits</div>
<div class="t S" style="top:952.5px;font-size:14px;line-height:14px;left:1144px;transform:translateX(-50%);">-</div>
<div style="left:847.7px;top:990.4px;width:16px;height:16px;border:1px solid #8e8f8f;background:linear-gradient(135deg,#dcdcdc 0%,#f6f6f6 100%)"></div>
<div class="t S" style="top:989.9px;font-size:18px;line-height:18px;left:879px;">Run Hits</div>
<div style="left:965px;top:988px;width:129px;height:30px;border:1px solid #7a7a7a;background:#fff"></div>
<div style="left:1073px;top:989px;width:20px;height:28px;border-left:1px solid #b8b8b8;background:linear-gradient(#f3f3f3,#dcdcdc)"></div>
<svg style="left:1073px;top:989px" width="20" height="28"><path d="M6 12 H14 L10 17 Z" fill="#222"/></svg>
<div class="t S" style="top:994.5px;font-size:18px;line-height:18px;left:970px;">Descending</div>
<div style="left:965px;top:1020px;width:43px;height:58px;background:#fff"></div>
<div class="t S" style="top:1021.5px;font-size:18px;line-height:18px;left:847.6px;">Run on Gen</div>
<div class="t S" style="top:1021.5px;font-size:18px;line-height:18px;left:986.5px;transform:translateX(-50%);">0</div>
<div class="t S" style="top:1052.5px;font-size:18px;line-height:18px;left:847.6px;">Run Cycles</div>
<div class="t S" style="top:1052.5px;font-size:18px;line-height:18px;left:986.5px;transform:translateX(-50%);">1</div>
<div style="left:1028.5px;top:1032.5px;width:15px;height:15px;border:1px solid #8b8b8b;border-radius:50%;background:radial-gradient(circle at 40% 40%,#ffffff 0%,#e9e9e9 70%,#d8d8d8 100%)"></div>
<div style="left:1032.5px;top:1036.5px;width:7px;height:7px;border-radius:50%;background:radial-gradient(circle at 40% 35%,#9fd3ff 0%,#2a7fd0 45%,#0d3f7a 100%)"></div>
<div class="t S" style="top:1031.5px;font-size:18px;line-height:18px;left:1061.6px;">Freq</div>
<div style="left:1028.5px;top:1063.5px;width:15px;height:15px;border:1px solid #8b8b8b;border-radius:50%;background:radial-gradient(circle at 40% 40%,#ffffff 0%,#e9e9e9 70%,#d8d8d8 100%)"></div>
<div class="t S" style="top:1062.5px;font-size:18px;line-height:18px;left:1061.6px;">Hit Value</div>
<div style="left:1157px;top:697px;width:213px;height:177px;border:1px solid #d9dde1;border-radius:4px;box-shadow:inset 1px 1px 0 #fbfbfb"></div>
<div style="left:1154px;top:694px;width:134px;height:6px;background:#f3f3f3"></div>
<div class="t S" style="top:688.5px;font-size:18px;line-height:18px;left:1158px;">Calculate Using</div>
<div style="left:1168.5px;top:721.5px;width:15px;height:15px;border:1px solid #8b8b8b;border-radius:50%;background:radial-gradient(circle at 40% 40%,#ffffff 0%,#e9e9e9 70%,#d8d8d8 100%)"></div>
<div style="left:1172.5px;top:725.5px;width:7px;height:7px;border-radius:50%;background:radial-gradient(circle at 40% 35%,#9fd3ff 0%,#2a7fd0 45%,#0d3f7a 100%)"></div>
<div class="t S" style="top:720.5px;font-size:18px;line-height:18px;left:1200px;">Running Average</div>
<div style="left:1168.5px;top:751.9px;width:15px;height:15px;border:1px solid #8b8b8b;border-radius:50%;background:radial-gradient(circle at 40% 40%,#ffffff 0%,#e9e9e9 70%,#d8d8d8 100%)"></div>
<div class="t S" style="top:750.9px;font-size:18px;line-height:18px;left:1200px;">Peak</div>
<div style="left:1168.0px;top:783.0px;width:16px;height:16px;border:1px solid #c8c8c8;background:#fbfbfb"></div>
<div class="t S" style="top:782.5px;font-size:18px;line-height:18px;color:#a6a6a6;left:1200px;">Single Scan</div>
<div style="left:1168.0px;top:814.3px;width:16px;height:16px;border:1px solid #8e8f8f;background:linear-gradient(135deg,#dcdcdc 0%,#f6f6f6 100%)"></div>
<div class="t S" style="top:813.8px;font-size:18px;line-height:18px;left:1200px;">Grade Program</div>
<div style="left:1168.0px;top:845.5px;width:16px;height:16px;border:1px solid #8e8f8f;background:linear-gradient(135deg,#dcdcdc 0%,#f6f6f6 100%)"></div>
<svg style="left:1168.0px;top:845.5px" width="16" height="16" viewBox="0 0 16 16"><path d="M4 8 L7 12 L12 3" fill="none" stroke="#2b4f80" stroke-width="1.8"/></svg>
<div class="t S" style="top:845.0px;font-size:18px;line-height:18px;left:1200px;">Prevent Duplicates</div>
<div style="left:1382px;top:739px;width:480px;height:259px;background:#fff;border-top:2px solid #3c3c3c;border-left:2px solid #3c3c3c"></div>
<div class="t S" style="top:713.5px;font-size:14px;line-height:14px;left:1395px;transform:translateX(-50%);">-</div>
<div class="t S" style="top:1005.5px;font-size:14px;line-height:14px;left:1384.5px;transform:translateX(-50%);">-</div>
<div class="t S" style="top:1005.5px;font-size:14px;line-height:14px;left:1670px;transform:translateX(-50%);">-</div>
<div class="t S" style="top:916.8px;font-size:18px;line-height:18px;right:654px;">BPM</div>
<div class="t S" style="top:916.8px;font-size:18px;line-height:18px;left:1285px;">0</div>
<div class="t S" style="top:948.0px;font-size:18px;line-height:18px;right:654px;">HRV</div>
<div class="t S" style="top:948.0px;font-size:18px;line-height:18px;left:1285px;">0</div>
<div class="t S" style="top:979.5px;font-size:18px;line-height:18px;right:654px;">VI Angle</div>
<div class="t S" style="top:979.5px;font-size:18px;line-height:18px;left:1285px;">0</div>
<div class="t S" style="top:1010.9px;font-size:18px;line-height:18px;right:654px;">Current</div>
<div class="t S" style="top:1010.9px;font-size:18px;line-height:18px;left:1285px;">0</div>
<div class="btn" style="left:1180px;top:1042px;width:95px;height:38px"></div>
<div class="t M" style="top:1054.0px;font-size:17px;line-height:17px;color:#111;left:1227.5px;transform:translateX(-50%) scaleY(1.17);">Analyze</div>
<div class="btn" style="left:1286px;top:1042px;width:116px;height:38px"></div>
<div class="t M" style="top:1054.0px;font-size:17px;line-height:17px;color:#111;left:1344.0px;transform:translateX(-50%) scaleY(1.17);">Analyze +</div>
<div class="dbtn" style="left:1415px;top:1042px;width:95px;height:38px"></div>
<div class="t M" style="top:1054.0px;font-size:17px;line-height:17px;color:#a8a8a8;left:1462.5px;transform:translateX(-50%) scaleY(1.17);">Baseline</div>
<div style="left:1509px;top:1042px;width:23px;height:38px;border:1px solid #9a9a9a;background:linear-gradient(90deg,#e6e6e6,#cfcfcf)"></div>
<div class="t S" style="top:1032.2px;font-size:18px;line-height:18px;left:1666px;transform:translateX(-50%);">0</div>
<div style="left:1685px;top:1034px;width:132px;height:14px;border:1px solid #a6a6a6;border-radius:2px;background:linear-gradient(#fafafa 0%,#f2f2f2 12%,#d3d6d9 22%,#c8cbce 50%,#d2d5d8 75%,#b8bbbe 100%)"></div>
<div class="t S" style="top:1032.2px;font-size:18px;line-height:18px;left:1836px;transform:translateX(-50%);">1</div>
<div style="left:1649.0px;top:1062.8px;width:16px;height:16px;border:1px solid #c8c8c8;background:#fbfbfb"></div>
<div class="t S" style="top:1062.3px;font-size:18px;line-height:18px;color:#a6a6a6;left:1682px;">Baseline Before BFB</div>
<div class="t S" style="top:128.1px;font-size:18.5px;line-height:18.5px;left:1050.3px;">Estimated Total Run Time</div>
<div class="t S" style="top:159.6px;font-size:18.5px;line-height:18.5px;left:1050.3px;">Current Preset Duration</div>
<div class="t S" style="top:190.8px;font-size:18.5px;line-height:18.5px;left:1050.3px;">Current Chain Duration</div>
<div class="t S" style="top:128.3px;font-size:18px;line-height:18px;left:1317.5px;">00:18:37</div>
<div class="t S" style="top:159.8px;font-size:18px;line-height:18px;left:1317.5px;">00:00:00</div>
<div class="t S" style="top:191.0px;font-size:18px;line-height:18px;left:1317.5px;">00:00:00</div>
<div style="left:1050px;top:219px;width:419px;height:156px;border:1px solid #828790;background:#f3f3f3"></div>
<div style="left:1054px;top:222px;width:411px;height:21px;background:#0078d7"></div>
<div class="t S" style="top:224.7px;font-size:18px;line-height:18px;color:#fff;left:1056.3px;">Acid Reflux p01</div>
<div class="t S" style="top:246.0px;font-size:18px;line-height:18px;left:1056.3px;">Acid Reflux p02</div>
<div class="t S" style="top:267.3px;font-size:18px;line-height:18px;left:1056.3px;">Acid Reflux p03</div>
<div class="t S" style="top:288.6px;font-size:18px;line-height:18px;left:1056.3px;">Acid Reflux p04</div>
<div class="t S" style="top:309.9px;font-size:18px;line-height:18px;left:1056.3px;">Acid Reflux p05</div>
<div class="t S" style="top:331.2px;font-size:18px;line-height:18px;left:1056.3px;">Acid Reflux p06</div>
<div style="left:1734px;top:116px;width:43px;height:44px;background:#f2f2f2;border-top:1px solid #fbfbfb;border-left:1px solid #fbfbfb;border-right:1px solid #6b6b6b;border-bottom:2px solid #5b5b5b"></div>
<svg style="left:1734px;top:116px" width="43" height="44" viewBox="0 0 43 44"><path d="M24.5 5 L20.5 17" stroke="#c9a9a0" stroke-width="1.6"/><path d="M22 15 L8.5 30 L18 34.5 L21 29.5 Z" fill="#b08a68"/><path d="M24 18 L34.5 28.5 M33.5 17 L23.5 28.5" stroke="#d43a3c" stroke-width="4.6" stroke-linecap="square"/></svg>
<div class="btn" style="left:1810px;top:117px;width:41px;height:42px"></div>
<div class="t M" style="top:131.0px;font-size:17px;line-height:17px;color:#111;left:1830.5px;transform:translateX(-50%) scaleY(1.17);">X</div>
<div style="left:1478px;top:208px;width:385px;height:166px;border:1px solid #d9dde1;border-radius:4px;box-shadow:inset 1px 1px 0 #fbfbfb"></div>
<div style="left:1485px;top:205px;width:139px;height:6px;background:#f3f3f3"></div>
<div class="t S" style="top:199.5px;font-size:18px;line-height:18px;left:1489px;">Reverse Lookup</div>
<div style="left:1489.0px;top:231.0px;width:16px;height:16px;border:1px solid #8e8f8f;background:linear-gradient(135deg,#dcdcdc 0%,#f6f6f6 100%)"></div>
<div class="t S" style="top:230.5px;font-size:18px;line-height:18px;left:1520px;">Include Harmonics</div>
<div style="left:1489.0px;top:262.6px;width:16px;height:16px;border:1px solid #8e8f8f;background:linear-gradient(135deg,#dcdcdc 0%,#f6f6f6 100%)"></div>
<div class="t S" style="top:262.1px;font-size:18px;line-height:18px;left:1520px;">Include Sub-Harmonics</div>
<div class="btn" style="left:1757px;top:221px;width:74px;height:39px"></div>
<div class="t M" style="top:233.5px;font-size:17px;line-height:17px;color:#111;left:1794.0px;transform:translateX(-50%) scaleY(1.17);">Go</div>
<div style="left:1489px;top:292px;width:151px;height:30px;border:1px solid #7a7a7a;background:#fff"></div>
<div style="left:1619px;top:293px;width:20px;height:28px;border-left:1px solid #b8b8b8;background:linear-gradient(#f3f3f3,#dcdcdc)"></div>
<svg style="left:1619px;top:293px" width="20" height="28"><path d="M6 12 H14 L10 17 Z" fill="#222"/></svg>
<div class="t S" style="top:298.0px;font-size:18px;line-height:18px;left:1494px;">Octave</div>
<div class="t S" style="top:293.8px;font-size:18px;line-height:18px;left:1665.3px;">Tolerance</div>
<div style="left:1756px;top:291px;width:65px;height:29px;background:#fff"></div>
<div class="t S" style="top:293.8px;font-size:18px;line-height:18px;left:1788.5px;transform:translateX(-50%);">.25</div>
<div class="t S" style="top:293.8px;font-size:18px;line-height:18px;left:1830px;">%</div>
<div class="t S" style="top:335.2px;font-size:18px;line-height:18px;left:1667.4px;">Include</div>
<div style="left:1734px;top:332px;width:87px;height:29px;background:#fff"></div>
<div class="t S" style="top:335.2px;font-size:18px;line-height:18px;left:1777px;transform:translateX(-50%);">0</div>
<div class="t S" style="top:335.2px;font-size:18px;line-height:18px;left:1830px;">Hz</div>
<div style="left:1051px;top:385px;width:598px;height:302px;border:1px solid #d9dde1;border-radius:4px;box-shadow:inset 1px 1px 0 #fbfbfb"></div>
<div style="left:1058px;top:382px;width:148px;height:6px;background:#f3f3f3"></div>
<div class="t S" style="top:376.5px;font-size:18px;line-height:18px;left:1062px;">Generator Output</div>
<div class="t S" style="top:398.5px;font-size:18px;line-height:18px;left:1285.6px;transform:translateX(-50%);">Out 1</div>
<div class="t S" style="top:398.5px;font-size:18px;line-height:18px;left:1494px;transform:translateX(-50%);">Out 2</div>
<div style="left:1189px;top:428px;width:215px;height:245px;background:#d5d5d5"></div>
<div style="left:1425px;top:428px;width:215px;height:245px;background:#d5d5d5"></div>
<div class="t S" style="top:430.0px;font-size:18px;line-height:18px;right:739.4000000000001px;">Frequency</div>
<div class="t S" style="top:430.0px;font-size:18px;line-height:18px;left:1296px;transform:translateX(-50%);">0</div>
<div class="t S" style="top:430.0px;font-size:18px;line-height:18px;left:1532.5px;transform:translateX(-50%);">0</div>
<div class="t S" style="top:461.1px;font-size:18px;line-height:18px;right:739.4000000000001px;">Waveform</div>
<div class="t S" style="top:461.1px;font-size:18px;line-height:18px;left:1296px;transform:translateX(-50%);">MM_ModSquare</div>
<div class="t S" style="top:461.1px;font-size:18px;line-height:18px;left:1532.5px;transform:translateX(-50%);">Inverse</div>
<div class="t S" style="top:492.1px;font-size:18px;line-height:18px;right:739.4000000000001px;">Duty Cycle</div>
<div class="t S" style="top:492.1px;font-size:18px;line-height:18px;left:1296px;transform:translateX(-50%);">50%</div>
<div class="t S" style="top:492.1px;font-size:18px;line-height:18px;left:1532.5px;transform:translateX(-50%);">50%</div>
<div class="t S" style="top:523.2px;font-size:18px;line-height:18px;right:739.4000000000001px;">Amplitude</div>
<div class="t S" style="top:523.2px;font-size:18px;line-height:18px;left:1296px;transform:translateX(-50%);">0v</div>
<div class="t S" style="top:523.2px;font-size:18px;line-height:18px;left:1532.5px;transform:translateX(-50%);">0v</div>
<div class="t S" style="top:554.3px;font-size:18px;line-height:18px;right:739.4000000000001px;">Offset</div>
<div class="t S" style="top:554.3px;font-size:18px;line-height:18px;left:1296px;transform:translateX(-50%);">0%</div>
<div class="t S" style="top:554.3px;font-size:18px;line-height:18px;left:1532.5px;transform:translateX(-50%);">0%</div>
<div class="t S" style="top:585.4px;font-size:18px;line-height:18px;right:739.4000000000001px;">Phase</div>
<div class="t S" style="top:585.4px;font-size:18px;line-height:18px;left:1296px;transform:translateX(-50%);">0 Degrees</div>
<div class="t S" style="top:585.4px;font-size:18px;line-height:18px;left:1532.5px;transform:translateX(-50%);">0 Degrees</div>
<div class="t S" style="top:616.4px;font-size:18px;line-height:18px;color:#a6a6a6;right:739.4000000000001px;">Angle</div>
<div class="t S" style="top:616.4px;font-size:18px;line-height:18px;color:#b9b9b9;left:1296px;transform:translateX(-50%);">-</div>
<div class="t S" style="top:616.4px;font-size:18px;line-height:18px;color:#b9b9b9;left:1532.5px;transform:translateX(-50%);">-</div>
<div class="t S" style="top:647.5px;font-size:18px;line-height:18px;color:#a6a6a6;right:739.4000000000001px;">Current</div>
<div class="t S" style="top:647.5px;font-size:18px;line-height:18px;color:#b9b9b9;left:1296px;transform:translateX(-50%);">-</div>
<div class="t S" style="top:647.5px;font-size:18px;line-height:18px;color:#b9b9b9;left:1532.5px;transform:translateX(-50%);">-</div>
<div style="left:1554px;top:398px;width:20px;height:19px;border:1px solid #7d7d7d;border-radius:3px;background:linear-gradient(#f7f7f7,#dedede)"></div>
<div style="left:1575px;top:398px;width:20px;height:19px;border:1px solid #7d7d7d;border-radius:3px;background:linear-gradient(#f7f7f7,#dedede)"></div>
<svg style="left:1554px;top:398px" width="41" height="19"><path d="M5 9.5 H15 M26 9.5 H36 M31 4.5 V14.5" stroke="#222" stroke-width="1.6"/></svg>
<svg style="left:1607px;top:385px" width="43" height="44" viewBox="0 0 43 44"><rect x="0.5" y="0.5" width="42" height="43" fill="#f3f3f3" stroke="#fff"/><path d="M42 0.5 V43.5 H0.5" fill="none" stroke="#6b6b6b" stroke-width="2"/><path d="M7 7 H30 L37 14 V37 H7 Z" fill="#3f86c8"/><rect x="12" y="7" width="14" height="10" fill="#fff"/><rect x="14" y="8.5" width="4" height="7" fill="#3f86c8"/><rect x="10" y="24" width="18" height="13" fill="#e8eef5"/><path d="M25 17 H33 V26 H38 L29 37 L20 26 H25 Z" fill="#6fbf2e"/></svg>
<div style="left:1661px;top:386px;width:204px;height:290px;border:1px solid #d9dde1;border-radius:4px;box-shadow:inset 1px 1px 0 #fbfbfb"></div>
<div style="left:1667.8px;top:383px;width:150px;height:6px;background:#f3f3f3"></div>
<div class="t S" style="top:377.5px;font-size:18px;line-height:18px;left:1671.8px;">Special Functions</div>
<svg style="left:1724px;top:473px" width="75" height="39" viewBox="0 0 75 39"><rect x="1" y="1" width="68" height="37" fill="#2b7cc4"/><rect x="1" y="1" width="68" height="1.6" fill="#17466f"/><rect x="1" y="3" width="68" height="3" fill="#6fb3e6"/><rect x="1" y="6.4" width="68" height="25.6" fill="#d6d6d4"/><rect x="1" y="32" width="68" height="1" fill="#222"/><rect x="13.5" y="11" width="26" height="15.5" rx="1" fill="#0c0c0c"/><rect x="42" y="11" width="4" height="16" fill="#2a3e66"/><circle cx="55.2" cy="18.2" r="5" fill="#cfcfcf" stroke="#9a9a9a" stroke-width="0.8"/><rect x="49" y="26" width="3.5" height="3.5" fill="#223"/><rect x="54" y="26" width="3.5" height="3.5" fill="#223"/><rect x="59" y="26" width="3.5" height="3.5" fill="#223"/><path d="M4 13 L7 20 L5 22 M8 15 L9 21" stroke="#333" stroke-width="0.8" fill="none"/><rect x="69" y="5" width="4.5" height="3" fill="#333"/><rect x="69" y="13" width="4.5" height="4" fill="#445"/><rect x="69" y="21" width="4.5" height="3.5" fill="#333"/><rect x="69" y="29" width="4.5" height="3" fill="#333"/></svg>
<div class="dbtn" style="left:1673px;top:543px;width:84px;height:39px"></div>
<div class="t M" style="top:555.5px;font-size:17px;line-height:17px;color:#a8a8a8;left:1715.0px;transform:translateX(-50%) scaleY(1.17);">Load GX</div>
<div class="dbtn" style="left:1769px;top:543px;width:84px;height:39px"></div>
<div class="t M" style="top:555.5px;font-size:17px;line-height:17px;color:#a8a8a8;left:1811.0px;transform:translateX(-50%) scaleY(1.17);">Paste</div>
<div class="dbtn" style="left:1673px;top:585px;width:84px;height:39px"></div>
<div class="t M" style="top:597.5px;font-size:17px;line-height:17px;color:#a8a8a8;left:1715.0px;transform:translateX(-50%) scaleY(1.17);">Copy</div>
<div class="dbtn" style="left:1769px;top:585px;width:84px;height:39px"></div>
<div class="t M" style="top:597.5px;font-size:17px;line-height:17px;color:#a8a8a8;left:1811.0px;transform:translateX(-50%) scaleY(1.17);">Erase</div>
<div class="btn" style="left:1673px;top:627px;width:84px;height:39px"></div>
<div class="t M" style="top:639.5px;font-size:17px;line-height:17px;color:#111;left:1715.0px;transform:translateX(-50%) scaleY(1.17);">Reset</div>
<svg style="left:549px;top:1110px" width="39" height="28" viewBox="0 0 39 28"><path d="M3 6 H11 L13 2 Q14 1 16 1 H22 Q24 1 25 2 L27 5 H34 Q37 5 37 8 V25 Q37 27 35 27 H3 Q1 27 1 25 V8 Q1 6 3 6 Z" fill="#0d0d0d"/><rect x="1" y="11" width="36" height="1.6" fill="#f0f0f0"/><circle cx="22" cy="16.5" r="8.4" fill="#e8e8e8"/><circle cx="22" cy="16.5" r="6.2" fill="#0d0d0d"/></svg>
<div class="red" style="left:28px;top:123px;width:213px;height:44px;"></div>
<div class="num" style="left:250px;top:128px;font-size:39px;line-height:39px">2</div>
<div class="num" style="left:100px;top:175px;font-size:37px;line-height:37px">3</div>
<div class="red" style="left:80px;top:212px;width:66px;height:63px;"></div>
<div class="num" style="left:446px;top:134px;font-size:41px;line-height:41px">4</div>
<div class="red" style="left:712px;top:45px;width:248px;height:41px;"></div>
<div class="num" style="left:675px;top:49px;font-size:37px;line-height:37px">1</div>
<div class="red" style="left:486px;top:117px;width:157px;height:66px;"></div>
</body></html>
